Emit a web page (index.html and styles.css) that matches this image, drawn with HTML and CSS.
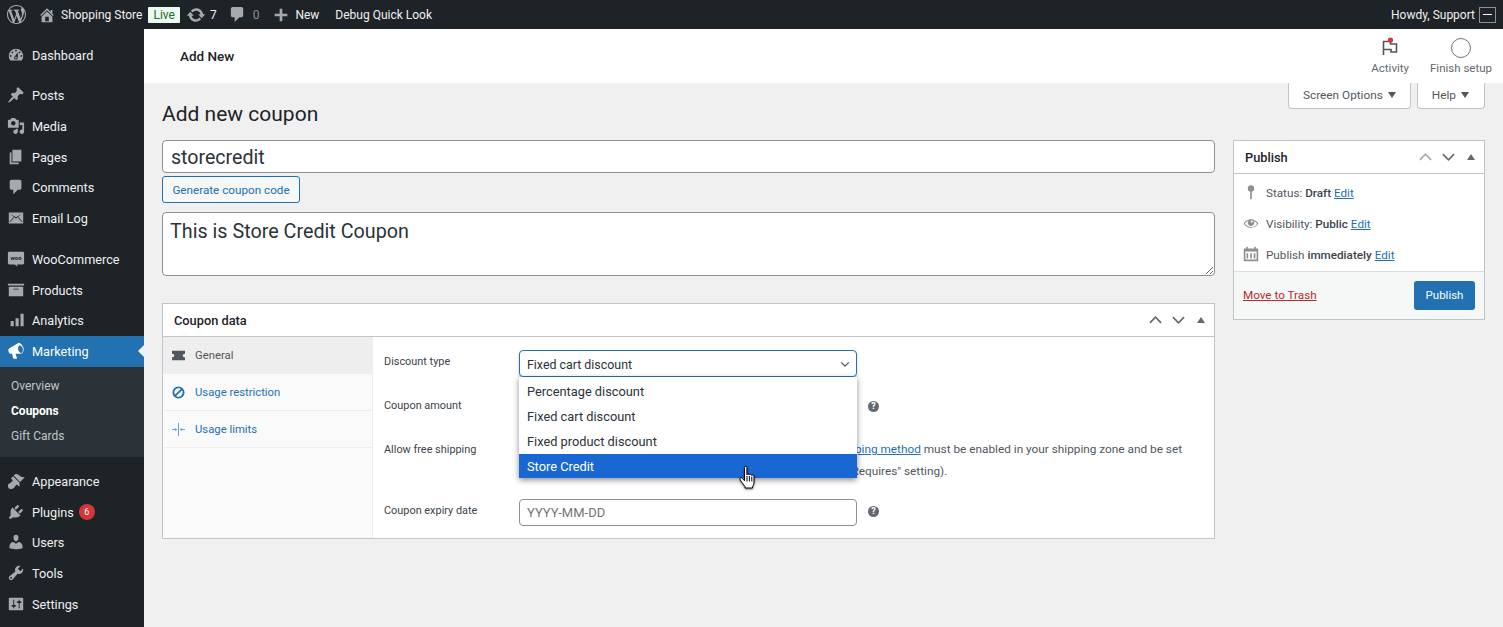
FILE: index.html
```html
<!DOCTYPE html>
<html lang="en">
<head>
    <meta charset="UTF-8">
    <title>Add new coupon - Shopping Store</title>
    <link rel="stylesheet" href="styles.css">
</head>
<body>
    <!-- Admin bar -->
    <div class="adminbar">
        <svg class="bar-logo" viewBox="0 0 20 20"><path d="M20 10c0-5.51-4.49-10-10-10C4.48 0 0 4.49 0 10c0 5.52 4.48 10 10 10 5.51 0 10-4.48 10-10zM7.78 15.37L4.37 6.22c.55-.02 1.17-.08 1.17-.08.5-.06.44-1.13-.06-1.11 0 0-1.45.11-2.37.11-.18 0-.37 0-.58-.01C4.12 2.69 6.87 1.11 10 1.11c2.33 0 4.45.87 6.05 2.34-.68-.11-1.65.39-1.65 1.58 0 .74.45 1.36.9 2.1.35.61.55 1.36.55 2.46 0 1.49-1.4 5-1.4 5l-3.03-8.37c.54-.02.82-.17.82-.17.5-.05.44-1.25-.06-1.22 0 0-1.44.12-2.38.12-.87 0-2.33-.12-2.33-.12-.5-.03-.56 1.2-.06 1.22l.92.08 1.26 3.41zM17.41 10c.24-.64.74-1.87.43-4.25.7 1.29 1.05 2.71 1.05 4.25 0 3.29-1.73 6.24-4.4 7.78.97-2.59 1.94-5.2 2.92-7.78zM6.1 18.09C3.12 16.65 1.11 13.53 1.11 10c0-1.3.23-2.48.72-3.59C3.25 10.3 4.67 14.2 6.1 18.09zm4.03-6.63l2.58 6.98c-.86.29-1.76.45-2.71.45-.79 0-1.57-.11-2.29-.33.81-2.38 1.62-4.74 2.42-7.1z"/></svg>
        <svg class="bar-icon home-icon" viewBox="0 0 20 20"><path d="M16 8.5l1.53 1.53-1.06 1.06L10 4.62l-6.47 6.47-1.06-1.06L10 2.5l4 4v-2h2v4zm-6-2.46l6 5.99V18H4v-5.97zM12 17v-5H8v5h4z"/></svg>
        <span class="bar-text site-name">Shopping Store</span>
        <span class="live-badge">Live</span>
        <svg class="bar-icon update-icon" viewBox="0 0 20 20"><path d="M10.2 3.28c3.53 0 6.43 2.61 6.92 6h2.08l-3.5 4-3.5-4h2.32c-.45-1.97-2.21-3.45-4.32-3.45-1.45 0-2.73.71-3.54 1.78L4.95 5.66C6.23 4.2 8.11 3.28 10.2 3.28zm-.4 13.44c-3.52 0-6.43-2.61-6.92-6H.8l3.5-4c1.17 1.33 2.33 2.67 3.5 4H5.48c.45 1.97 2.21 3.45 4.32 3.45 1.45 0 2.73-.71 3.54-1.78l1.71 1.95c-1.28 1.46-3.15 2.38-5.25 2.38z"/></svg>
        <span class="bar-text update-count">7</span>
        <svg class="bar-icon comment-icon" viewBox="0 0 20 20"><path d="M5 2h9c1.1 0 2 .9 2 2v7c0 1.1-.9 2-2 2h-2l-5 5v-5H5c-1.1 0-2-.9-2-2V4c0-1.1.9-2 2-2z"/></svg>
        <span class="bar-text bar-dim">0</span>
        <svg class="bar-icon plus-icon" viewBox="0 0 20 20"><path d="M17 8.5v3h-5.5V17h-3v-5.5H3v-3h5.5V3h3v5.5z"/></svg>
        <span class="bar-text new-link">New</span>
        <span class="bar-text">Debug Quick Look</span>
        <span class="bar-text howdy">Howdy, Support</span>
        <span class="avatar"></span>
    </div>

    <div class="layout">
        <!-- Side menu -->
        <nav class="sidemenu">
            <a class="menu-item menu-first"><svg viewBox="0 0 20 20"><path d="M3.76 16h12.48c1.1-1.37 1.76-3.11 1.76-5 0-4.42-3.58-8-8-8s-8 3.58-8 8c0 1.89.66 3.63 1.76 5zM10 4c.55 0 1 .45 1 1s-.45 1-1 1-1-.45-1-1 .45-1 1-1zM6 6c.55 0 1 .45 1 1s-.45 1-1 1-1-.45-1-1 .45-1 1-1zm8 0c.55 0 1 .45 1 1s-.45 1-1 1-1-.45-1-1 .45-1 1-1zm-5.37 5.55L12 7v6c0 1.1-.9 2-2 2s-2-.9-2-2c0-.57.24-1.08.63-1.45zM4 10c.55 0 1 .45 1 1s-.45 1-1 1-1-.45-1-1 .45-1 1-1zm12 0c.55 0 1 .45 1 1s-.45 1-1 1-1-.45-1-1 .45-1 1-1zm-5 3c0-.55-.45-1-1-1s-1 .45-1 1 .45 1 1 1 1-.45 1-1z"/></svg>Dashboard</a>
            <a class="menu-item menu-gap"><svg viewBox="0 0 20 20"><path d="M10.44 3.02l1.82-1.82 6.36 6.35-1.83 1.82c-1.05-.68-2.48-.57-3.41.36l-.75.75c-.92.93-1.04 2.35-.35 3.41l-1.83 1.82-2.41-2.41-2.8 2.79c-.42.42-3.38 2.71-3.8 2.29s1.86-3.39 2.28-3.81l2.79-2.79L4.1 9.36l1.83-1.82c1.05.69 2.48.57 3.4-.36l.75-.75c.93-.92 1.05-2.35.36-3.41z"/></svg>Posts</a>
            <a class="menu-item"><svg viewBox="0 0 20 20"><path d="M13 11V4c0-.55-.45-1-1-1h-1.67L9 1H5L3.67 3H2c-.55 0-1 .45-1 1v7c0 .55.45 1 1 1h10c.55 0 1-.45 1-1zM7 4.5c1.38 0 2.5 1.12 2.5 2.5S8.38 9.5 7 9.5 4.5 8.38 4.5 7 5.62 4.5 7 4.5zM14 6h5v10.5c0 1.38-1.12 2.5-2.5 2.5S14 17.88 14 16.5s1.12-2.5 2.5-2.5c.17 0 .34.02.5.05V9h-3V6zm-4 8.05V13h2v3.5c0 1.38-1.12 2.5-2.5 2.5S7 17.88 7 16.5 8.12 14 9.5 14c.17 0 .34.02.5.05z"/></svg>Media</a>
            <a class="menu-item"><svg viewBox="0 0 20 20"><path d="M6 15V2h10v13H6zm-1 1h8v2H3V5h2v11z"/></svg>Pages</a>
            <a class="menu-item"><svg viewBox="0 0 20 20"><path d="M5 2h9c1.1 0 2 .9 2 2v7c0 1.1-.9 2-2 2h-2l-5 5v-5H5c-1.1 0-2-.9-2-2V4c0-1.1.9-2 2-2z"/></svg>Comments</a>
            <a class="menu-item"><svg viewBox="0 0 20 20"><path fill-rule="evenodd" d="M2 4h16v12H2zM3.2 5.2L10 10.6l6.8-5.4-6.8 4zM3 14.6l5-5-.6-.5L3 13.6zM17 14.6l-5-5 .6-.5 4.4 4.5z"/></svg>Email Log</a>
            <a class="menu-item menu-woo"><svg viewBox="0 0 20 20"><path d="M2.5 2h15c.8 0 1.5.7 1.5 1.5v11c0 .8-.7 1.5-1.5 1.5H11l1 2.5L8.5 16h-6C1.7 16 1 15.3 1 14.5v-11C1 2.7 1.7 2 2.5 2z"/><text class="woo-mark" x="10" y="11.5" text-anchor="middle">woo</text></svg>WooCommerce</a>
            <a class="menu-item"><svg viewBox="0 0 20 20"><path d="M19 3v2H1V3h18zM2 6.5h16V17H2V6.5zm11 3V8.5H7v1h6z"/></svg>Products</a>
            <a class="menu-item"><svg viewBox="0 0 20 20"><path d="M18.5 3v14H15V3h3.5zm-5.5 5v9H9.5V8H13zM7.5 11v6H4v-6h3.5z"/></svg>Analytics</a>
            <a class="menu-item menu-active"><svg viewBox="0 0 20 20"><path d="M18.15 5.94c.46 1.62.38 3.22-.02 4.48-.42 1.28-1.26 2.18-2.3 2.48-.16.06-.26.06-.4.06-.06.02-.12.02-.18.02-.06.02-.14.02-.22.02H9.5l1.6 5c.02.14-.06.26-.14.34-.08.1-.24.16-.34.16H7.4c-.1 0-.26-.06-.34-.16-.08-.08-.16-.2-.14-.34l-1.3-5H4.25c-.5.06-1.08-.18-1.54-.62s-.88-1.08-1.06-1.88c-.24-.8-.2-1.56-.02-2.2.18-.62.58-1.08 1.06-1.3l9-5.42c.1-.06.18-.1.24-.16.06-.04.14-.08.24-.12.16-.08.28-.12.36-.16.08-.02.16-.04.2-.04 1.02-.16 2.06.2 2.98 1.04.94.84 1.68 2.04 2.14 3.66zm-2.24 6.18c.66-.24 1.2-.82 1.5-1.7.3-.86.38-1.98.1-3.14-.3-1.14-.8-2.04-1.46-2.6-.62-.58-1.34-.82-1.98-.68-.72.2-1.2.78-1.5 1.66-.28.88-.36 1.98-.08 3.14.3 1.14.84 2.04 1.5 2.62.64.58 1.34.84 1.92.7z"/></svg>Marketing</a>
            <div class="submenu">
                <a class="sub-item">Overview</a>
                <a class="sub-item sub-current">Coupons</a>
                <a class="sub-item">Gift Cards</a>
            </div>
            <a class="menu-item menu-gap"><svg viewBox="0 0 20 20"><path d="M14.48 11.06L7.41 3.99l1.5-1.5c.5-.56 2.3-.47 3.51.32 1.21.8 1.43 1.28 2.91 2.1 1.18.64 2.45 1.26 4.45.85zm-.71.71L6.7 4.7 4.93 6.47c-.39.39-.39 1.02 0 1.41l1.06 1.06c.39.39.39 1.03 0 1.42-.6.6-1.43 1.11-2.21 1.69-.35.26-.7.53-1.01.84C1.43 13.23 1 14.37 1 15.5 1 17.43 2.57 19 4.5 19c1.13 0 2.27-.43 3.13-1.29.31-.31.58-.66.84-1.01.58-.78 1.09-1.61 1.69-2.21.39-.39 1.03-.39 1.42 0l1.06 1.06c.39.39 1.02.39 1.41 0z"/></svg>Appearance</a>
            <a class="menu-item"><svg viewBox="0 0 20 20"><path d="M13.11 4.36L9.87 7.6 8 5.73l3.24-3.24c.35-.34 1.05-.2 1.56.32.52.51.66 1.21.31 1.55zm-8 1.77l.91-1.12 9.01 9.01-1.19.84c-.71.71-2.63 1.16-3.82 1.16H6.14L4.9 17.26c-.59.59-1.54.59-2.12 0-.59-.58-.59-1.53 0-2.12l1.24-1.24v-3.88c0-1.13.4-3.19 1.09-3.89zm7.26 3.97l3.24-3.24c.34-.35 1.04-.21 1.55.31.52.51.66 1.21.31 1.55l-3.24 3.25z"/></svg>Plugins<span class="count-badge">6</span></a>
            <a class="menu-item"><svg viewBox="0 0 20 20"><path d="M10 9.25c-2.27 0-2.73-3.44-2.73-3.44C7 4.02 7.82 2 9.97 2c2.16 0 2.98 2.02 2.71 3.81 0 0-.41 3.44-2.68 3.44zm0 2.57L12.72 10c2.39 0 4.52 2.33 4.52 4.53v2.49s-3.65 1.13-7.24 1.13c-3.65 0-7.24-1.13-7.24-1.13v-2.49c0-2.25 1.94-4.48 4.47-4.48z"/></svg>Users</a>
            <a class="menu-item"><svg viewBox="0 0 20 20"><path d="M16.68 9.77c-1.34 1.34-3.3 1.67-4.95.99l-5.41 6.52c-.99.99-2.59.99-3.58 0s-.99-2.59 0-3.57l6.52-5.42c-.68-1.65-.35-3.61.99-4.95 1.28-1.28 3.12-1.62 4.72-1.06l-2.89 2.89 2.82 2.82 2.86-2.87c.53 1.58.18 3.39-1.08 4.65zM3.81 16.21c.4.39 1.04.39 1.43 0 .4-.4.4-1.04 0-1.43-.39-.4-1.03-.4-1.43 0-.39.39-.39 1.03 0 1.43z"/></svg>Tools</a>
            <a class="menu-item"><svg viewBox="0 0 20 20"><path d="M18 16V4c0-.55-.45-1-1-1H3c-.55 0-1 .45-1 1v12c0 .55.45 1 1 1h14c.55 0 1-.45 1-1zM8 11h1c.55 0 1 .45 1 1s-.45 1-1 1H8v1.5c0 .28-.22.5-.5.5s-.5-.22-.5-.5V13H6c-.55 0-1-.45-1-1s.45-1 1-1h1V5.5c0-.28.22-.5.5-.5s.5.22.5.5V11zm5-2h-1c-.55 0-1-.45-1-1s.45-1 1-1h1V5.5c0-.28.22-.5.5-.5s.5.22.5.5V7h1c.55 0 1 .45 1 1s-.45 1-1 1h-1v5.5c0 .28-.22.5-.5.5s-.5-.22-.5-.5V9z"/></svg>Settings</a>
        </nav>

        <div class="main">
            <!-- White header strip -->
            <div class="topstrip">
                <span class="strip-title">Add New</span>
                <div class="strip-actions">
                    <div class="strip-action">
                        <svg class="flag-icon" viewBox="0 0 20 20"><path class="flag-line" d="M3.5 17V3.5h7V6h6v8H11v-2.5H3.500"/><circle class="flag-dot" cx="10.5" cy="2" r="2.6"/></svg>
                        <span>Activity</span>
                    </div>
                    <div class="strip-action">
                        <span class="setup-ring"></span>
                        <span>Finish setup</span>
                    </div>
                </div>
            </div>

            <div class="content">
                <div class="meta-links">
                    <span class="meta-tab">Screen Options<i class="meta-arrow"></i></span>
                    <span class="meta-tab">Help<i class="meta-arrow"></i></span>
                </div>
                <h1 class="page-title">Add new coupon</h1>

                <div class="columns">
                    <div class="col-main">
                        <input class="title-input" type="text" value="storecredit">
                        <button class="generate-btn" type="button">Generate coupon code</button>
                        <textarea class="desc-input">This is Store Credit Coupon</textarea>

                        <div class="postbox coupon-box">
                            <div class="postbox-head">
                                <h2>Coupon data</h2>
                                <div class="handles">
                                    <svg viewBox="0 0 14 8"><path d="M1 7l6-6 6 6"/></svg>
                                    <svg viewBox="0 0 14 8"><path d="M1 1l6 6 6-6"/></svg>
                                    <i class="handle-toggle"></i>
                                </div>
                            </div>
                            <div class="coupon-body">
                                <ul class="coupon-tabs">
                                    <li class="coupon-tab tab-active"><svg viewBox="0 0 14 12"><path class="tab-fill" d="M0 1h14v3c-1.5 0-2.5 1-2.5 2s1 2 2.5 2v3H0V8c1.5 0 2.5-1 2.5-2S1.5 4 0 4z"/></svg>General</li>
                                    <li class="coupon-tab"><svg viewBox="0 0 14 14"><circle class="tab-stroke" cx="7" cy="7" r="5.5"/><path class="tab-stroke" d="M3 11l8-8"/></svg>Usage restriction</li>
                                    <li class="coupon-tab"><svg viewBox="0 0 14 14"><path class="tab-thin" d="M7 0v14M0 7h5M9 7h5M3.5 5.5L5 7 3.5 8.5M10.5 5.5L9 7l1.5 1.5"/></svg>Usage limits</li>
                                </ul>
                                <div class="coupon-fields">
                                    <div class="field field-type">
                                        <label>Discount type</label>
                                        <div class="select-wrap">
                                            <div class="fake-select">Fixed cart discount<svg viewBox="0 0 12 8"><path d="M1.5 1.5L6 6l4.5-4.5"/></svg></div>
                                            <ul class="select-menu">
                                                <li>Percentage discount</li>
                                                <li>Fixed cart discount</li>
                                                <li>Fixed product discount</li>
                                                <li class="option-hover">Store Credit</li>
                                            </ul>
                                            <svg class="hand-cursor" viewBox="0 0 20 26"><path d="M6.5 2.5c0-1.4 2.4-1.4 2.4 0v7.3c.2-1.1 2.3-1.1 2.4.2.3-1 2.2-1 2.4.4.4-.8 2.2-.6 2.3.8v5.8c0 2.4-.8 3.5-1.4 4.5v1.5H7v-1.5c-1.5-1.7-3.6-4.6-4.8-6.8-.8-1.5 1.1-2.7 2.2-1.3l2.1 2.4z"/><path d="M9 11v5.5M11.4 11v5.5M13.8 11.5v5"/></svg>
                                        </div>
                                    </div>
                                    <div class="field field-amount">
                                        <label>Coupon amount</label>
                                        <input class="text-input" type="text">
                                        <span class="help-tip">?</span>
                                    </div>
                                    <div class="field field-shipping">
                                        <label>Allow free shipping</label>
                                        <p class="field-note"><span class="note-check"></span>Check this box if the coupon grants free shipping. A <a>free shipping method</a> must be enabled in your shipping zone and be set<br>to require "a valid free shipping coupon" (see the "Free Shipping Requires" setting).</p>
                                    </div>
                                    <div class="field field-expiry">
                                        <label>Coupon expiry date</label>
                                        <input class="text-input" type="text" placeholder="YYYY-MM-DD">
                                        <span class="help-tip">?</span>
                                    </div>
                                </div>
                            </div>
                        </div>
                    </div>

                    <div class="col-side">
                        <div class="postbox">
                            <div class="postbox-head">
                                <h2>Publish</h2>
                                <div class="handles">
                                    <svg class="handle-dim" viewBox="0 0 14 8"><path d="M1 7l6-6 6 6"/></svg>
                                    <svg viewBox="0 0 14 8"><path d="M1 1l6 6 6-6"/></svg>
                                    <i class="handle-toggle"></i>
                                </div>
                            </div>
                            <div class="publish-rows">
                                <div class="publish-row"><svg viewBox="0 0 20 20"><circle cx="10" cy="5.5" r="4"/><rect x="9" y="8" width="2" height="11"/></svg>Status: <b>Draft</b> <a>Edit</a></div>
                                <div class="publish-row"><svg viewBox="0 0 20 20"><path d="M18.3 9.5C15 4.9 8.5 3.8 3.9 7.2c-1.2.9-2.2 2.1-3 3.4.2.4.5.8.8 1.2 3.3 4.6 9.6 5.6 14.2 2.4.9-.7 1.7-1.4 2.4-2.4.3-.4.5-.8.8-1.2-.2-.5-.5-.8-.8-1.1zm-8.200-2.300c.5-.5 1.300-.5 1.800 0s.5 1.300 0 1.800-1.300.5-1.800 0c-.5-.5-.5-1.300 0-1.800zm-.1 7.700c-3.100 0-6-1.600-7.700-4.200C3.500 9 5.100 7.800 7 7c-.7.8-1 1.700-1 2.700 0 2.200 1.700 4.100 4 4.100 2.200 0 4.100-1.700 4.100-4 0-1-.4-2-1.100-2.700 1.900.8 3.500 2 4.700 3.700-1.700 2.600-4.600 4.200-7.700 4.200z"/></svg>Visibility: <b>Public</b> <a>Edit</a></div>
                                <div class="publish-row"><svg viewBox="0 0 20 20"><path fill-rule="evenodd" d="M4 1h2v2h8V1h2v2h3v16H1V3h3zM3 7v10h14V7zM4.5 9h2v6.5h-2zM9 9h2v6.5H9zM13.5 9h2v6.5h-2z"/></svg>Publish <b>immediately</b> <a>Edit</a></div>
                            </div>
                            <div class="publish-foot">
                                <a class="trash-link">Move to Trash</a>
                                <button class="publish-btn" type="button">Publish</button>
                            </div>
                        </div>
                    </div>
                </div>
            </div>
        </div>
    </div>
</body>
</html>
```
FILE: styles.css
```css
* {
    margin: 0;
    padding: 0;
    box-sizing: border-box;
    font-family: 'Roboto', 'Liberation Sans', sans-serif;
}

html, body {
    height: 100%;
    overflow: hidden;
}

body {
    background-color: #f0f0f1;
    color: #3c434a;
    font-size: 12px;
}

ul {
    list-style: none;
}

/* Admin bar */
.adminbar {
    display: flex;
    align-items: center;
    height: 29px;
    background-color: #1d2327;
    color: #f0f0f1;
    padding: 0 7px;
}

.bar-logo {
    width: 19px;
    height: 19px;
    fill: #a7aaad;
    margin-right: 12px;
}

.bar-icon {
    width: 18px;
    height: 18px;
    fill: #a7aaad;
}

.bar-text {
    font-size: 12px;
    white-space: nowrap;
}

.site-name {
    margin-left: 5px;
}

.live-badge {
    background-color: #edfaef;
    color: #1e6b2e;
    font-size: 12px;
    line-height: 16px;
    height: 16px;
    padding: 0 5px;
    margin-left: 6px;
    border-radius: 1px;
}

.update-icon {
    margin-left: 6px;
    width: 20px;
    height: 20px;
}

.update-count {
    margin-left: 4px;
}

.comment-icon {
    margin-left: 11px;
    width: 19px;
    height: 19px;
}

.bar-dim {
    color: #8c8f94;
    margin-left: 6px;
}

.plus-icon {
    margin-left: 13px;
}

.new-link {
    margin-left: 5px;
    margin-right: 16px;
}

.howdy {
    margin-left: auto;
}

.avatar {
    width: 17px;
    height: 16px;
    margin-left: 4px;
    border: 1px solid #8c8f94;
    background: linear-gradient(#fff, #fff) center / 9px 1px no-repeat #1d2327;
}

.layout {
    display: flex;
    height: calc(100% - 29px);
}

/* Side menu */
.sidemenu {
    width: 144px;
    flex-shrink: 0;
    background-color: #1d2327;
}

.menu-item {
    display: flex;
    align-items: center;
    height: 30.75px;
    color: #f0f0f1;
    font-size: 12.7px;
    padding-left: 32px;
    position: relative;
}

.menu-item svg {
    position: absolute;
    left: 7px;
    top: 6px;
    width: 18px;
    height: 18px;
    fill: #a7aaad;
}

.woo-mark {
    font-size: 6.5px;
    font-weight: 700;
    fill: #1d2327;
}

.menu-first {
    margin-top: 11.4px;
}

.menu-gap {
    margin-top: 9px;
}

.menu-woo {
    margin-top: 10px;
}

.menu-active {
    background-color: #2271b1;
    color: #fff;
}

.menu-active svg {
    fill: #fff;
}

.menu-active::after {
    content: "";
    position: absolute;
    right: 0;
    top: 9px;
    border: 6px solid transparent;
    border-right-color: #f0f0f1;
    border-left-width: 0;
}

.submenu {
    background-color: #2c3338;
    padding: 7px 0;
    height: 90px;
}

.sub-item {
    display: block;
    height: 25px;
    line-height: 25px;
    padding-left: 11px;
    font-size: 12px;
    color: #c3c4c7;
}

.sub-current {
    color: #fff;
    font-weight: 700;
}

.count-badge {
    width: 16px;
    height: 16px;
    margin-left: 5px;
    border-radius: 50%;
    background-color: #d63638;
    color: #fff;
    font-size: 9px;
    line-height: 16px;
    text-align: center;
}

/* Main area */
.main {
    flex: 1;
    min-width: 0;
}

.topstrip {
    display: flex;
    align-items: center;
    justify-content: space-between;
    height: 54px;
    background-color: #fff;
    padding: 0 11px 0 36px;
}

.strip-title {
    font-size: 13.5px;
    font-weight: 500;
    color: #1d2327;
}

.strip-actions {
    display: flex;
    gap: 21px;
}

.strip-action {
    display: flex;
    flex-direction: column;
    align-items: center;
    gap: 3px;
    font-size: 11.5px;
    color: #646970;
}

.flag-icon {
    width: 20px;
    height: 20px;
    overflow: visible;
}

.flag-line {
    fill: none;
    stroke: #50575e;
    stroke-width: 1.6;
}

.flag-dot {
    fill: #d63638;
}

.setup-ring {
    width: 20px;
    height: 20px;
    border: 1.5px solid #757575;
    border-radius: 50%;
}

.content {
    padding: 16px 18px 0;
}

.meta-links {
    float: right;
    display: flex;
    gap: 6px;
    margin-top: -16px;
}

.meta-tab {
    display: flex;
    align-items: center;
    height: 26px;
    background-color: #fff;
    border: 1px solid #c3c4c7;
    border-top: none;
    border-radius: 0 0 4px 4px;
    font-size: 11.8px;
    color: #50575e;
    padding: 0 14px 1px;
}

.meta-tab:last-child {
    padding-right: 15px;
}

.meta-arrow {
    margin-left: 5px;
    border: 4px solid transparent;
    border-top: 6px solid #50575e;
    border-bottom-width: 0;
}

.page-title {
    font-size: 21px;
    font-weight: 400;
    line-height: 30px;
    color: #1d2327;
    margin-bottom: 11px;
}

.columns {
    display: flex;
    gap: 18px;
    align-items: flex-start;
}

.col-main {
    flex: 1;
    min-width: 0;
}

.col-side {
    width: 252px;
    flex-shrink: 0;
}

.title-input {
    display: block;
    width: 100%;
    height: 33px;
    border: 1px solid #8c8f94;
    border-radius: 4px;
    padding: 2px 8px 0;
    font-size: 19.6px;
    color: #2c3338;
    background-color: #fff;
}

.generate-btn {
    display: block;
    width: 138px;
    height: 27px;
    margin-top: 3px;
    background-color: #f6f7f7;
    border: 1px solid #2271b1;
    border-radius: 3px;
    font-size: 11.7px;
    color: #2271b1;
}

.desc-input {
    display: block;
    width: 100%;
    height: 64px;
    margin-top: 9px;
    border: 1px solid #8c8f94;
    border-radius: 4px;
    padding: 6px 7px;
    font-size: 19.75px;
    line-height: 26px;
    color: #2c3338;
    background-color: #fff;
}

/* Postboxes */
.postbox {
    background-color: #fff;
    border: 1px solid #c3c4c7;
}

.coupon-box {
    margin-top: 27px;
}

.postbox-head {
    display: flex;
    align-items: center;
    justify-content: space-between;
    height: 33px;
    padding: 0 9px 0 11px;
    border-bottom: 1px solid #c3c4c7;
}

.postbox-head h2 {
    font-size: 12.8px;
    font-weight: 500;
    color: #1d2327;
}

.handles {
    display: flex;
    align-items: center;
    gap: 10px;
}

.handles svg {
    width: 13px;
    height: 8px;
    fill: none;
    stroke: #646970;
    stroke-width: 1.8;
}

.handles .handle-dim {
    stroke: #a7aaad;
}

.handle-toggle {
    margin-left: 2px;
    border: 4px solid transparent;
    border-bottom: 6px solid #646970;
    border-top-width: 0;
}

/* Coupon data panel */
.coupon-body {
    display: flex;
    height: 201px;
}

.coupon-tabs {
    width: 210px;
    flex-shrink: 0;
    background-color: #fafafa;
    border-right: 1px solid #eee;
}

.coupon-tab {
    display: flex;
    align-items: center;
    gap: 10px;
    height: 37px;
    padding: 1px 0 0 9px;
    border-bottom: 1px solid #eee;
    font-size: 11.3px;
    color: #2271b1;
}

.coupon-tab svg {
    width: 13px;
    height: 13px;
    flex-shrink: 0;
}

.tab-active {
    padding-top: 0;
    background-color: #eee;
    color: #555;
    border-bottom: none;
}

.tab-fill {
    fill: #50575e;
}

.tab-stroke {
    fill: none;
    stroke: #2271b1;
    stroke-width: 2;
}

.tab-thin {
    fill: none;
    stroke: #5b9dd9;
    stroke-width: 1;
}

.coupon-fields {
    flex: 1;
    min-width: 0;
    padding: 13px 0 0 11px;
}

.field {
    display: flex;
    align-items: flex-start;
}

.field label {
    width: 135px;
    flex-shrink: 0;
    font-size: 10.9px;
    line-height: 18px;
    padding-top: 3px;
    color: #3c434a;
}

.field-amount label {
    padding-top: 5px;
}

.field-amount {
    margin-top: 15px;
}

.field-shipping {
    margin-top: 19px;
}

.field-expiry {
    margin-top: 17px;
}

.select-wrap {
    position: relative;
    z-index: 2;
}

.fake-select {
    display: flex;
    align-items: center;
    justify-content: space-between;
    width: 338px;
    height: 27px;
    padding: 1px 6px 0 7px;
    background-color: #fff;
    border: 1.5px solid #2271b1;
    border-radius: 4px;
    font-size: 12.4px;
    color: #2c3338;
    box-shadow: 0 2px 3px rgba(0, 0, 0, 0.2);
}

.fake-select svg {
    width: 10px;
    height: 7px;
    fill: none;
    stroke: #50575e;
    stroke-width: 1.5;
}

.select-menu {
    position: absolute;
    top: 27px;
    left: 0;
    width: 338px;
    height: 101px;
    background-color: #fff;
    box-shadow: 0 2px 6px rgba(0, 0, 0, 0.45);
    font-size: 12.8px;
    color: #2c3338;
}

.select-menu li {
    height: 25px;
    line-height: 25px;
    padding-left: 8px;
}

.select-menu li:first-child {
    margin-top: 2px;
}

.select-menu .option-hover {
    height: 24px;
    background-color: #1967d2;
    color: #fff;
}

.hand-cursor {
    position: absolute;
    left: 219px;
    top: 115px;
    width: 20px;
    height: 26px;
    fill: #fff;
    stroke: #000;
    stroke-width: 1;
    filter: drop-shadow(0 1px 1px rgba(0, 0, 0, 0.5));
}

.text-input {
    display: block;
    width: 338px;
    height: 27px;
    padding: 0 7px;
    background-color: #fff;
    border: 1px solid #8c8f94;
    border-radius: 4px;
    font-size: 13px;
    color: #2c3338;
}

.text-input::placeholder {
    color: #757575;
}

.help-tip {
    width: 11px;
    height: 11px;
    margin: 9px 0 0 11px;
    border-radius: 50%;
    background-color: #646970;
    color: #fff;
    font-size: 9px;
    font-weight: 700;
    line-height: 11px;
    text-align: center;
}

.field-expiry .help-tip {
    margin-top: 7px;
}

.field-note {
    font-size: 11.8px;
    line-height: 22px;
    white-space: nowrap;
    color: #50575e;
}

.note-check {
    display: inline-block;
    width: 18px;
}

.field-note a,
.publish-row a {
    color: #2271b1;
    text-decoration: underline;
}

/* Publish box */
.publish-rows {
    padding: 4px 0 0;
}

.publish-row {
    height: 31px;
    line-height: 31px;
    padding-left: 32px;
    position: relative;
    font-size: 11.7px;
    color: #50575e;
    white-space: nowrap;
}

.publish-row b {
    font-weight: 500;
    color: #3c434a;
}

.publish-row svg {
    position: absolute;
    left: 9px;
    top: 6px;
    width: 16px;
    height: 16px;
    fill: #8c8f94;
}

.publish-foot {
    display: flex;
    align-items: center;
    justify-content: space-between;
    height: 48px;
    padding: 0 9px 1px;
    background-color: #f6f7f7;
    border-top: 1px solid #dcdcde;
}

.trash-link {
    font-size: 11.7px;
    color: #b32d2e;
    text-decoration: underline;
}

.publish-btn {
    width: 61px;
    height: 29px;
    padding-bottom: 1px;
    background-color: #2271b1;
    border: none;
    border-radius: 3px;
    color: #fff;
    font-size: 11.5px;
}
```
